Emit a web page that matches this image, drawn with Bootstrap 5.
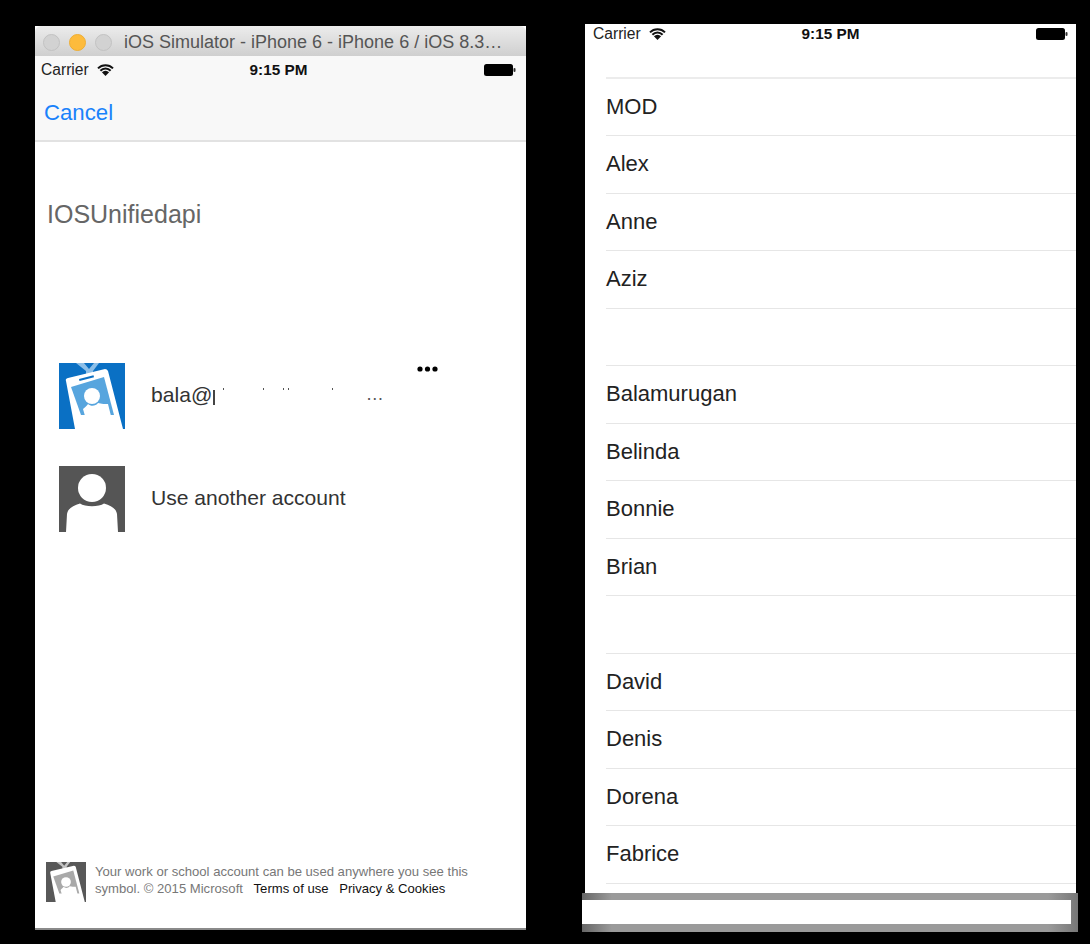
<!DOCTYPE html>
<html lang="en">
<head>
    <meta charset="UTF-8">
    <title>iOS Simulator - Account picker and contacts</title>
    <link href="https://cdn.jsdelivr.net/npm/bootstrap@5.3.0/dist/css/bootstrap.min.css" rel="stylesheet">
    <style>
        html, body { height: 944px; overflow: hidden; }
        body { background: #000; font-family: "Liberation Sans", Arial, sans-serif; color: #222; }
        .stage { padding: 24px 0 0 35px; gap: 56px; }

        .sim-left { width: 491px; height: 904px; margin-top: 2px; background: #fff; border-bottom: 2px solid #8a8a8a; }
        .sim-title { height: 30px; border-radius: 6px 6px 0 0; background: linear-gradient(#ececec, #cfcfcf); padding-left: 8px; gap: 9px; }
        .light { width: 17px; height: 17px; margin-top: 2px; border-radius: 50%; background: #d2d2d2; border: 1px solid #c2c2c2; }
        .light-amber { background: #fdbb3c; border-color: #eeae34; }
        .sim-title-text { font-size: 18px; color: #555; margin: 3px 0 0 3px; white-space: nowrap; }

        .status-row { height: 28px; font-size: 15.6px; padding: 0 10px 0 6px; }
        .status-side { width: 180px; }
        .status-time { font-weight: 700; color: #111; font-size: 15.3px; }
        .nav-area { background: #f8f8f8; border-bottom: 2px solid #e2e2e2; }
        .nav-bar { height: 56px; padding: 1px 0 0 9px; }
        .cancel-link { color: #1a82fb; font-size: 22.2px; text-decoration: none; }

        .app-name { font-size: 25px; color: #666; padding: 58px 0 0 12px; height: 221px; line-height: 29px; }
        .account { height: 103px; padding-left: 24px; }
        .avatar { width: 66px; height: 66px; flex: none; display: block; }
        .account-name { height: 66px; padding-bottom: 3px; font-size: 21.1px; color: #333; margin-left: 26px; white-space: nowrap; }
        .more-dots { top: 3px; left: 382px; display: block; }
        .cut-stem { width: 1.5px; height: 15px; margin: 6px 0 0 1px; background: #444; }
        .speck { width: 1px; height: 2px; background: #555; margin-top: -12px; }
        .speck-1 { margin-left: 8px; }
        .speck-2 { margin-left: 39px; }
        .speck-3 { margin-left: 19px; }
        .speck-4 { margin-left: 4px; }
        .speck-5 { margin-left: 43px; }
        .name-end { margin-left: 33px; font-size: 18px; color: #555; }

        .legal { padding: 0 0 26px 11px; font-size: 13.1px; line-height: 17px; color: #777; }
        .legal-icon { width: 40px; height: 40px; flex: none; display: block; }
        .legal-text { margin-left: 9px; margin-top: -4px; }
        .legal-link { color: #111; text-decoration: none; margin-left: 7px; }

        .sim-right { width: 496px; }
        .screen { width: 491px; height: 869px; margin-left: 3px; background: #fff; overflow: hidden; }
        .screen .status-row { height: 20px; padding: 0 8px 0 8px; }
        .screen-top { height: 34.5px; border-bottom: 2px solid #ececec; margin-left: 21px; }
        .people { margin-left: 21px; }
        .people .list-group-item { height: 57.5px; padding: 0; background: transparent; border: 0; border-bottom: 1.5px solid #e6e6e6; font-size: 22px; line-height: 56px; color: #222; }
        .tail { width: 496px; height: 39px; background: linear-gradient(90deg, #666, #9a9a9a 6%, #9a9a9a 94%, #777); padding: 7px 7px 8px 0; }
        .tail-box { height: 24px; background: #fff; }
    </style>
</head>
<body>

<div class="stage d-flex align-items-start">

    <!-- simulator window -->
    <div class="sim-left d-flex flex-column">
        <div class="sim-title d-flex align-items-center">
            <span class="light"></span>
            <span class="light light-amber"></span>
            <span class="light"></span>
            <span class="sim-title-text">iOS Simulator - iPhone 6 - iPhone 6 / iOS 8.3…</span>
        </div>

        <div class="nav-area">
            <div class="status-row d-flex align-items-center justify-content-between">
                <div class="status-side d-flex align-items-center gap-2">
                    <span>Carrier</span>
                    <svg width="17" height="12" viewBox="0 0 17 12"><path d="M1 4.4a10.5 10.5 0 0 1 15 0M3.4 6.8a7 7 0 0 1 10.2 0" fill="none" stroke="#111" stroke-width="2"/><path d="M8.5 12L4.9 8.3a5 5 0 0 1 7.2 0z" fill="#111"/></svg>
                </div>
                <span class="status-time">9:15 PM</span>
                <div class="status-side d-flex justify-content-end">
                    <svg width="32" height="14" viewBox="0 0 32 14"><rect x="0" y="1" width="29" height="12" rx="2.5" fill="#000"/><rect x="29.5" y="5" width="2" height="4" rx="1" fill="#333"/></svg>
                </div>
            </div>
            <div class="nav-bar d-flex align-items-center">
                <a class="cancel-link" href="#">Cancel</a>
            </div>
        </div>

        <div class="app-name">IOSUnifiedapi</div>

        <div class="account d-flex position-relative">
            <svg class="avatar" viewBox="0 0 66 66">
                <rect width="66" height="66" fill="#0a70c4"/>
                <path d="M17 0h8l5 6 5-6h5l-6 8v5h-7V8z" fill="#8dbfe8"/>
                <path d="M7 18Q6 16 9 15L46 6Q48 6 49 8L64 66H16z" fill="#fff"/>
                <path d="M12 24L45 14 55 52H22z" fill="#57a5de"/>
                <rect x="20" y="14" width="15" height="2" fill="#0a70c4" transform="rotate(-15 28 15)"/>
                <circle cx="33" cy="33" r="8" fill="#fff"/>
                <path d="M26 53L24 46C26 44 28 43 29 41 32 44 37 43 39 40 42 41 47 41 49 41L52 53z" fill="#fff"/>
            </svg>
            <div class="account-name d-flex align-items-center">
                <span>bala@</span><span class="cut-stem"></span>
                <span class="speck speck-1"></span>
                <span class="speck speck-2"></span>
                <span class="speck speck-3"></span>
                <span class="speck speck-4"></span>
                <span class="speck speck-5"></span>
                <span class="name-end">…</span>
            </div>
            <svg class="more-dots position-absolute" width="22" height="6" viewBox="0 0 22 6"><circle cx="3" cy="3" r="2.6" fill="#000"/><circle cx="10.5" cy="3" r="2.6" fill="#000"/><circle cx="18" cy="3" r="2.6" fill="#000"/></svg>
        </div>

        <div class="account d-flex">
            <svg class="avatar" viewBox="0 0 66 66">
                <rect width="66" height="66" fill="#555"/>
                <circle cx="33" cy="22" r="14" fill="#fff"/>
                <path d="M7 66L8 48C9 42 14 40 21 37.5 26 41 40 41 45 37.5 52 40 57 42 58 48L59 66z" fill="#fff"/>
            </svg>
            <div class="account-name d-flex align-items-center">Use another account</div>
        </div>

        <div class="legal d-flex align-items-center mt-auto">
            <svg class="legal-icon" viewBox="0 0 66 66">
                <rect width="66" height="66" fill="#585858"/>
                <path d="M17 0h8l5 6 5-6h5l-6 8v5h-7V8z" fill="#c4c4c4"/>
                <path d="M7 18Q6 16 9 15L46 6Q48 6 49 8L64 66H16z" fill="#fff"/>
                <path d="M12 24L45 14 55 52H22z" fill="#a9a9a9"/>
                <circle cx="33" cy="33" r="8" fill="#fff"/>
                <path d="M26 53L24 46C26 44 28 43 29 41 32 44 37 43 39 40 42 41 47 41 49 41L52 53z" fill="#fff"/>
            </svg>
            <div class="legal-text">
                Your work or school account can be used anywhere you see this<br>
                symbol. © 2015 Microsoft <a class="legal-link" href="#">Terms of use</a> <a class="legal-link" href="#">Privacy &amp; Cookies</a>
            </div>
        </div>
    </div>

    <!-- contacts screen -->
    <div class="sim-right">
        <div class="screen">
            <div class="status-row d-flex align-items-center justify-content-between">
                <div class="status-side d-flex align-items-center gap-2">
                    <span>Carrier</span>
                    <svg width="17" height="12" viewBox="0 0 17 12"><path d="M1 4.4a10.5 10.5 0 0 1 15 0M3.4 6.8a7 7 0 0 1 10.2 0" fill="none" stroke="#111" stroke-width="2"/><path d="M8.5 12L4.9 8.3a5 5 0 0 1 7.2 0z" fill="#111"/></svg>
                </div>
                <span class="status-time">9:15 PM</span>
                <div class="status-side d-flex justify-content-end">
                    <svg width="32" height="14" viewBox="0 0 32 14"><rect x="0" y="1" width="29" height="12" rx="2.5" fill="#000"/><rect x="29.5" y="5" width="2" height="4" rx="1" fill="#333"/></svg>
                </div>
            </div>
            <div class="screen-top"></div>
            <ul class="people list-group list-group-flush">
                <li class="list-group-item">MOD</li>
                <li class="list-group-item">Alex</li>
                <li class="list-group-item">Anne</li>
                <li class="list-group-item">Aziz</li>
                <li class="list-group-item">&nbsp;</li>
                <li class="list-group-item">Balamurugan</li>
                <li class="list-group-item">Belinda</li>
                <li class="list-group-item">Bonnie</li>
                <li class="list-group-item">Brian</li>
                <li class="list-group-item">&nbsp;</li>
                <li class="list-group-item">David</li>
                <li class="list-group-item">Denis</li>
                <li class="list-group-item">Dorena</li>
                <li class="list-group-item">Fabrice</li>
                <li class="list-group-item">&nbsp;</li>
            </ul>
        </div>
        <div class="tail">
            <div class="tail-box"></div>
        </div>
    </div>
</div>

</body>
</html>
